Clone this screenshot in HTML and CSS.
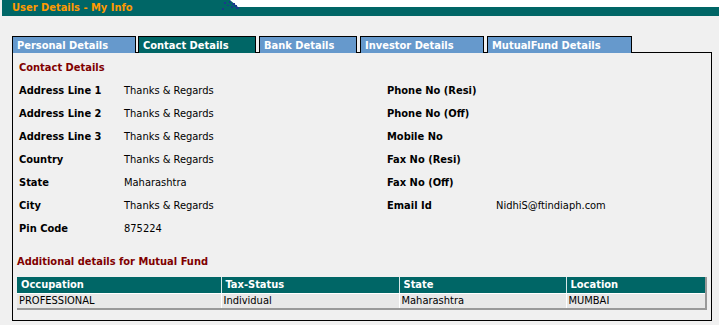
FILE: index.html
```html
<!DOCTYPE html>
<html lang="en">
<head>
    <meta charset="UTF-8">
    <title>User Details - My Info</title>
    <link rel="stylesheet" href="styles.css">
</head>
<body>
    <div class="titlebar">
        <div class="titlebar-left">User Details - My Info</div>
        <svg class="titlebar-deco" width="22" height="16" viewBox="0 0 22 16">
            <rect x="0" y="0" width="22" height="16" fill="#006666"/>
            <polygon points="8,0 22,0 22,7 16,7" fill="#ffffff"/>
            <rect x="2" y="2" width="2" height="2" fill="#1a3a8a"/>
            <rect x="0" y="8" width="2" height="2" fill="#1a3a8a"/>
            <rect x="7" y="1" width="2" height="2" fill="#1a3a8a"/>
            <rect x="10" y="3" width="3" height="2" fill="#1a3a8a"/>
            <rect x="12" y="5" width="3" height="2" fill="#1a3a8a"/>
            <rect x="9" y="6" width="2" height="2" fill="#1a3a8a"/>
            <rect x="14" y="7" width="3" height="2" fill="#1a3a8a"/>
            <rect x="5" y="5" width="2" height="1" fill="#1a3a8a"/>
        </svg>
        <div class="titlebar-right"></div>
    </div>

    <div class="tabs">
        <div class="tab">Personal Details</div>
        <div class="tab active">Contact Details</div>
        <div class="tab">Bank Details</div>
        <div class="tab">Investor Details</div>
        <div class="tab">MutualFund Details</div>
    </div>

    <div class="panel">
        <h3 class="section-title">Contact Details</h3>
        <div class="details">
            <div class="label">Address Line 1</div><div class="value">Thanks &amp; Regards</div>
            <div class="label">Phone No (Resi)</div><div class="value"></div>

            <div class="label">Address Line 2</div><div class="value">Thanks &amp; Regards</div>
            <div class="label">Phone No (Off)</div><div class="value"></div>

            <div class="label">Address Line 3</div><div class="value">Thanks &amp; Regards</div>
            <div class="label">Mobile No</div><div class="value"></div>

            <div class="label">Country</div><div class="value">Thanks &amp; Regards</div>
            <div class="label">Fax No (Resi)</div><div class="value"></div>

            <div class="label">State</div><div class="value">Maharashtra</div>
            <div class="label">Fax No (Off)</div><div class="value"></div>

            <div class="label">City</div><div class="value">Thanks &amp; Regards</div>
            <div class="label">Email Id</div><div class="value">NidhiS@ftindiaph.com</div>

            <div class="label">Pin Code</div><div class="value">875224</div>
            <div class="label"></div><div class="value"></div>
        </div>

        <h3 class="section-title additional">Additional details for Mutual Fund</h3>
        <table class="fund-table">
            <thead>
                <tr>
                    <th class="col-occ">Occupation</th>
                    <th class="col-tax">Tax-Status</th>
                    <th class="col-state">State</th>
                    <th class="col-loc">Location</th>
                </tr>
            </thead>
            <tbody>
                <tr>
                    <td>PROFESSIONAL</td>
                    <td>Individual</td>
                    <td>Maharashtra</td>
                    <td>MUMBAI</td>
                </tr>
            </tbody>
        </table>
    </div>
</body>
</html>
```

FILE: styles.css
```css
* {margin: 0; padding: 0; box-sizing: border-box;}
body {background-color: #F0F0F0; color: #000000; font-family: 'DejaVu Sans Condensed', 'DejaVu Sans', sans-serif; font-size: 11px;}

.titlebar {display: flex; height: 16px; margin-left: 2px;}
.titlebar-left {background-color: #006666; color: #FF9900; font-weight: bold; font-size: 11px; line-height: 16px; padding-left: 10px; width: 220px;}
.titlebar-deco {display: block; flex: none;}
.titlebar-right {flex: 1; background-color: #006666; border-top: 7px solid #FFFFFF;}

.tabs {display: flex; gap: 2px; margin: 20px 0 0 12px; height: 17px; position: relative; z-index: 1;}
.tab {background-color: #6699CC; color: #FFFFFF; font-weight: bold; border: 1px solid #000000; border-bottom: none; padding: 0 4px; line-height: 17px; width: 124px;}
.tab:nth-child(2) {width: 118px;}
.tab:nth-child(3) {width: 98px; margin-left: 1px;}
.tab:nth-child(4) {width: 124px; margin-left: 1px;}
.tab:nth-child(5) {width: 145px; margin-left: 1px;}
.tab.active {background-color: #006666;}

.panel {margin: -1px 0 0 12px; width: 700px; height: 269px; border: 1px solid #000000; padding: 8px 4px 0 4px;}
.section-title {color: #800000; font-size: 11px; font-weight: bold; line-height: 14px; padding-left: 2px;}
.details {display: grid; grid-template-columns: 105px 263px 109px 1fr; grid-auto-rows: 23px; margin-top: 9px; padding-left: 2px;}
.details .label {font-weight: bold; line-height: 14px;}
.details .value {line-height: 14px;}

.section-title.additional {margin-top: 10px; padding-left: 0;}
.fund-table {margin-top: 8px; width: 690px; border-collapse: collapse; border-right: 2px solid #999999; border-bottom: 2px solid #999999;}
.fund-table th {background-color: #006666; color: #FFFFFF; font-weight: bold; text-align: left; height: 16px; padding: 0 4px; border-right: 1px solid #D8E8E8; border-bottom: 1px solid #FFFFFF;}
.fund-table td {background-color: #E8E8E8; height: 14px; padding: 0 2px; border-right: 1px solid #FFFFFF; line-height: 14px;}
.fund-table th:last-child, .fund-table td:last-child {border-right: none;}
.fund-table .col-occ {width: 204px;}
.fund-table .col-tax {width: 178px;}
.fund-table .col-state {width: 167px;}
```
